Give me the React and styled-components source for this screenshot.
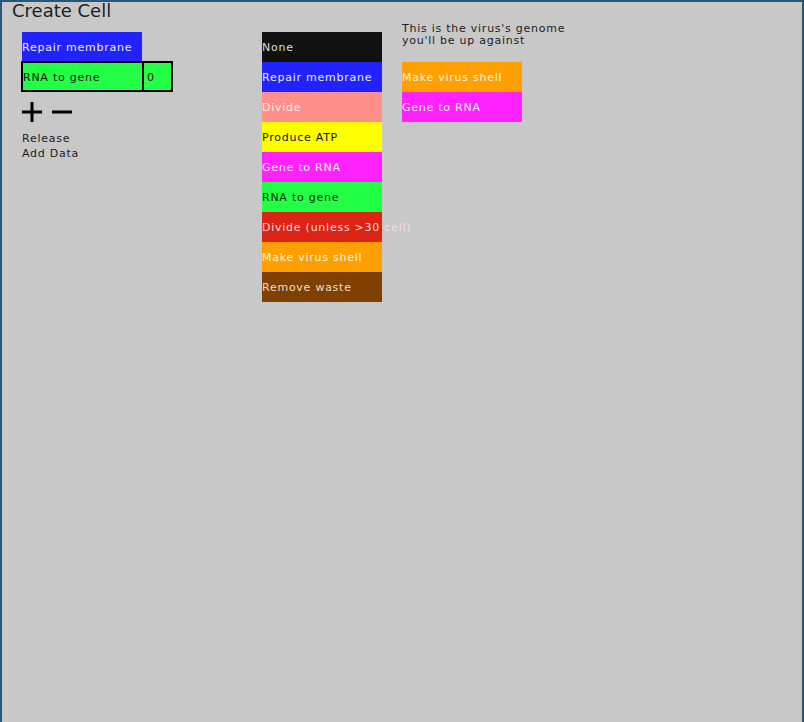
import React from 'react';
import styled, { createGlobalStyle } from 'styled-components';

const GlobalStyle = createGlobalStyle`
  html, body {
    margin: 0;
    padding: 0;
    background: #c8c8c8;
  }
  body {
    font-family: "DejaVu Sans", sans-serif;
  }
`;

const Frame = styled.div`
  box-sizing: border-box;
  width: 804px;
  height: 722px;
  border: 2px solid #28557a;
  border-bottom: none;
  background: #c8c8c8;
  color: #222;
  overflow: hidden;
`;

const Title = styled.h1`
  margin: 0 0 0 10px;
  font-size: 18px;
  font-weight: normal;
  line-height: 18px;
  height: 20px;
  color: #1e1e1e;
`;

const Columns = styled.div`
  display: flex;
  padding-left: 20px;
`;

const Column = styled.div`
  width: ${p => p.width}px;
  padding-top: ${p => p.top}px;
  display: flex;
  flex-direction: column;
`;

const Tile = styled.div`
  box-sizing: border-box;
  width: 120px;
  height: ${p => p.h || 30}px;
  padding-top: 2px;
  background: ${p => p.bg};
  color: ${p => p.fg};
  font-size: 11px;
  letter-spacing: 0.75px;
  line-height: ${p => (p.h || 30) - 2}px;
  white-space: nowrap;
  overflow: visible;
`;

const GeneRow = styled.div`
  display: flex;
  margin-left: -1px;
`;

const GeneBox = styled.div`
  box-sizing: border-box;
  width: ${p => p.w}px;
  height: 31px;
  margin-left: ${p => p.ml || 0}px;
  border: 2px solid #000;
  background: #22ff44;
  color: #111;
  font-size: 11px;
  letter-spacing: 0.75px;
  line-height: 29px;
  padding-left: ${p => p.pl || 0}px;
`;

const Controls = styled.div`
  display: flex;
  gap: 10px;
  margin-top: 10px;
`;

const IconButton = styled.button`
  border: none;
  background: none;
  padding: 0;
  width: 20px;
  height: 20px;
  cursor: pointer;
  svg { display: block; }
`;

const Links = styled.div`
  margin-top: 9px;
  font-size: 11px;
  letter-spacing: 0.75px;
  line-height: 15px;
  color: #222;
`;

const Note = styled.p`
  margin: 0;
  padding-top: 1px;
  font-size: 11px;
  letter-spacing: 0.75px;
  line-height: 12px;
  color: #222;
  height: 39px;
`;

const palette = [
  { label: 'None', bg: '#111111', fg: '#dddddd' },
  { label: 'Repair membrane', bg: '#2222ff', fg: '#eeeeff' },
  { label: 'Divide', bg: '#ff8f8a', fg: '#ffeeee' },
  { label: 'Produce ATP', bg: '#ffff00', fg: '#111111' },
  { label: 'Gene to RNA', bg: '#ff22ff', fg: '#ffeeff' },
  { label: 'RNA to gene', bg: '#22ff44', fg: '#0a2a10' },
  { label: 'Divide (unless >30 cell)', bg: '#dd2216', fg: '#f4dddd' },
  { label: 'Make virus shell', bg: '#ffa000', fg: '#fff6e6' },
  { label: 'Remove waste', bg: '#804000', fg: '#eeddcc' },
];

const virus = [palette[7], palette[4]];

const Plus = () => (
  <svg width="20" height="20" viewBox="0 0 20 20">
    <rect x="0" y="8.5" width="20" height="3" fill="#000" />
    <rect x="8.5" y="0" width="3" height="20" fill="#000" />
  </svg>
);

const Minus = () => (
  <svg width="20" height="20" viewBox="0 0 20 20">
    <rect x="0" y="8.5" width="20" height="3" fill="#000" />
  </svg>
);

export default function App() {
  return (
    <>
      <GlobalStyle />
      <Frame>
        <Title>Create Cell</Title>
        <Columns>
          <Column width={240} top={10}>
            <Tile bg="#2222ff" fg="#eeeeff" h={29}>Repair membrane</Tile>
            <GeneRow>
              <GeneBox w={123}>RNA to gene</GeneBox>
              <GeneBox w={31} ml={-2} pl={3}>0</GeneBox>
            </GeneRow>
            <Controls>
              <IconButton aria-label="add"><Plus /></IconButton>
              <IconButton aria-label="remove"><Minus /></IconButton>
            </Controls>
            <Links>
              <div>Release</div>
              <div>Add Data</div>
            </Links>
          </Column>
          <Column width={140} top={10}>
            {palette.map(p => (
              <Tile key={p.label} bg={p.bg} fg={p.fg}>{p.label}</Tile>
            ))}
          </Column>
          <Column width={200} top={0}>
            <Note>
              This is the virus's genome
              <br />
              you'll be up against
            </Note>
            {virus.map(p => (
              <Tile key={p.label} bg={p.bg} fg={p.fg}>{p.label}</Tile>
            ))}
          </Column>
        </Columns>
      </Frame>
    </>
  );
}
